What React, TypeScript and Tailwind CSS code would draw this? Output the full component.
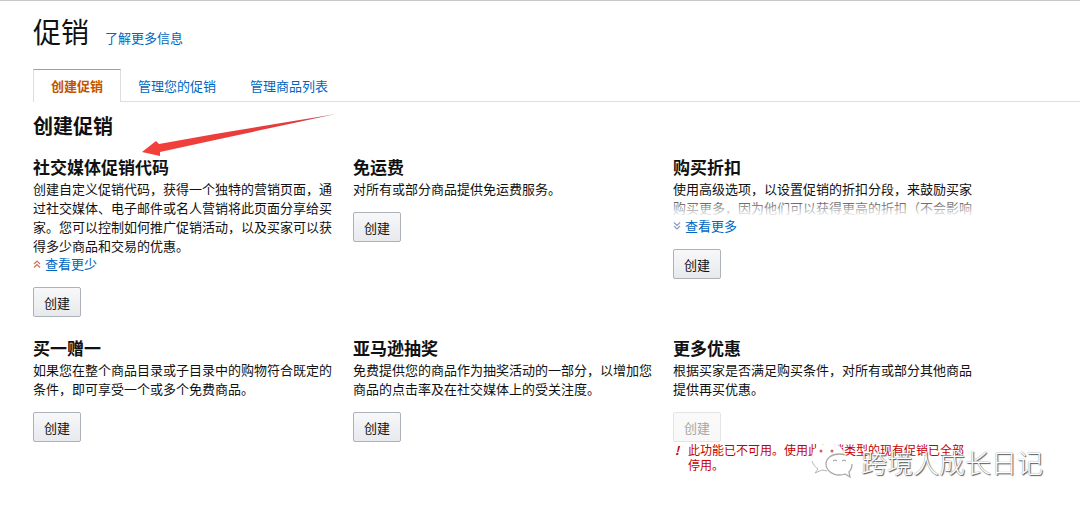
import type { ReactNode } from "react";
import clsx from "clsx";

type Toggle = "more" | "less";

interface Promotion {
  id: string;
  title: string;
  description: ReactNode;
  toggle?: Toggle;
  error?: string;
}

const tabs = [
  { label: "创建促销", active: true },
  { label: "管理您的促销", active: false },
  { label: "管理商品列表", active: false },
];

const promotions: Promotion[] = [
  {
    id: "social",
    title: "社交媒体促销代码",
    description:
      "创建自定义促销代码，获得一个独特的营销页面，通过社交媒体、电子邮件或名人营销将此页面分享给买家。您可以控制如何推广促销活动，以及买家可以获得多少商品和交易的优惠。",
    toggle: "less",
  },
  {
    id: "shipping",
    title: "免运费",
    description: "对所有或部分商品提供免运费服务。",
  },
  {
    id: "percentage",
    title: "购买折扣",
    description: "使用高级选项，以设置促销的折扣分段，来鼓励买家购买更多，因为他们可以获得更高的折扣（不会影响",
    toggle: "more",
  },
  {
    id: "bogo",
    title: "买一赠一",
    description: "如果您在整个商品目录或子目录中的购物符合既定的条件，即可享受一个或多个免费商品。",
  },
  {
    id: "giveaway",
    title: "亚马逊抽奖",
    description: "免费提供您的商品作为抽奖活动的一部分，以增加您商品的点击率及在社交媒体上的受关注度。",
  },
  {
    id: "external",
    title: "更多优惠",
    description: "根据买家是否满足购买条件，对所有或部分其他商品提供再买优惠。",
    error: "此功能已不可用。使用此促销类型的现有促销已全部停用。",
  },
];

const ToggleLink = ({ toggle }: { toggle: Toggle }) => (
  <a href="#" className="flex items-center gap-1 text-[13px] leading-[18px] text-[#0066c0]">
    <svg
      className={clsx("h-2 w-2", toggle === "less" ? "text-[#d0705a]" : "rotate-180 text-[#8d9fc0]")}
      viewBox="0 0 8 8"
      fill="none"
      stroke="currentColor"
      strokeWidth="1.2"
      aria-hidden="true"
    >
      <path d="M1 4 4 1 7 4M1 7.5 4 4.5 7 7.5" />
    </svg>
    {toggle === "less" ? "查看更少" : "查看更多"}
  </a>
);

const PromotionCard = ({ id, title, description, toggle, error }: Promotion) => (
  <section className="pr-5" aria-labelledby={id}>
    <h3 id={id} className="text-[17px] leading-[25px] font-bold">
      {title}
    </h3>
    <div className="relative">
      <p className="text-[13px] leading-[19px]">{description}</p>
      {toggle === "more" && (
        <div className="absolute inset-x-0 bottom-0 h-5 bg-gradient-to-b from-white/10 to-white" />
      )}
    </div>
    {toggle && <ToggleLink toggle={toggle} />}
    <button
      type="button"
      disabled={Boolean(error)}
      className="mt-[14px] block h-[30px] w-12 rounded-xs border border-[#adb1b8] bg-gradient-to-b from-[#f8f8fa] to-[#e7e9ec] text-[13px] leading-none disabled:border-[#e4e4e4] disabled:from-[#fafafa] disabled:to-[#f8f8f8] disabled:text-[#a6a6a6]"
    >
      创建
    </button>
    {error && (
      <p className="flex gap-[7px] text-xs leading-[15px] text-[#c40000]">
        <span className="w-2 text-center font-bold italic">!</span>
        <span className="flex-1">{error}</span>
      </p>
    )}
  </section>
);

const Arrow = () => (
  <svg className="absolute top-[112px] left-[142px] h-[44px] w-[196px]" viewBox="0 0 196 44" aria-hidden="true">
    <defs>
      <linearGradient id="arrow-fill" x1="0" x2="1">
        <stop offset="0" stopColor="#f5403a" />
        <stop offset="0.8" stopColor="#e03c3e" />
        <stop offset="1" stopColor="#a8747a" />
      </linearGradient>
    </defs>
    <path fill="url(#arrow-fill)" d="M0 39 14 28 17 31 73 21 194 1 73 27 18 39 18 43Z" />
  </svg>
);

const Watermark = () => (
  <div className="absolute top-[443px] left-[810px] flex items-center">
    <svg className="h-9 w-[51px]" viewBox="0 0 51 36" aria-hidden="true">
      <path
        fill="#fff"
        d="M17 0C8 0 2 5 2 13c0 4 2 8 6 10l-2 5 6-3c3 1 8 1 11 0L34 9C32 3 28-1 17 0Z"
      />
      <path fill="none" stroke="#b5b5b5" d="M2 17c1 3 3 6 6 8l-3 4 7-3 5 1" />
      <circle cx="11" cy="7" r="1.5" fill="#d56060" />
      <circle cx="22" cy="7" r="1.5" fill="#d56060" />
      <path
        fill="#fff"
        d="M29 10c-7 0-13 4-13 10s6 11 13 11c2 0 4 0 6-1l5 3-1-5c2-2 3-5 3-8 0-6-6-10-13-10Z"
      />
      <path
        fill="none"
        stroke="#aaa"
        strokeWidth="1.3"
        d="M35 11c-2-1-4-1-6-1-7 0-13 4-13 10s6 11 13 11c2 0 4 0 6-1l5 3-1-5c2-2 3-5 3-8"
      />
      <path fill="none" stroke="#999" d="M23 17q2-2 4 0M32 17q2-2 4 0" />
    </svg>
    <span className="text-[26px] leading-9 font-light whitespace-nowrap text-white [text-shadow:1px_1px_1px_#555,0_0_1px_#777]">
      跨境人成长日记
    </span>
  </div>
);

const App = () => {
  return (
    <div className="relative min-h-screen border-t border-[#c8c8c8] bg-white pl-[33px] font-['Noto_Sans_CJK_SC',sans-serif] text-[#111]">
      {/* Page title */}
      <header className="flex items-baseline gap-4 pt-[10px]">
        <h1 className="text-[28px] leading-10">促销</h1>
        <a href="#" className="text-[13px] text-[#0066c0]">
          了解更多信息
        </a>
      </header>

      {/* Tabs */}
      <nav className="mt-[18px] flex border-b border-[#ddd]">
        {tabs.map((tab) => (
          <a
            key={tab.label}
            href="#"
            aria-current={tab.active ? "page" : undefined}
            className={clsx(
              "-mb-px px-[17px] text-[13px] leading-8",
              tab.active
                ? "border-x border-t border-x-[#ddd] border-t-[#e0913f] bg-white font-bold text-[#c45500]"
                : "pt-px text-[#0066c0]",
            )}
          >
            {tab.label}
          </a>
        ))}
      </nav>

      {/* Promotion types */}
      <main>
        <h2 className="pt-2 text-[20px] leading-8 font-bold">创建促销</h2>
        <div className="mt-3 grid max-w-[960px] grid-cols-3 gap-y-[18px]">
          {promotions.map((promotion) => (
            <PromotionCard key={promotion.id} {...promotion} />
          ))}
        </div>
      </main>

      <Arrow />
      <Watermark />
    </div>
  );
};

export default App;
